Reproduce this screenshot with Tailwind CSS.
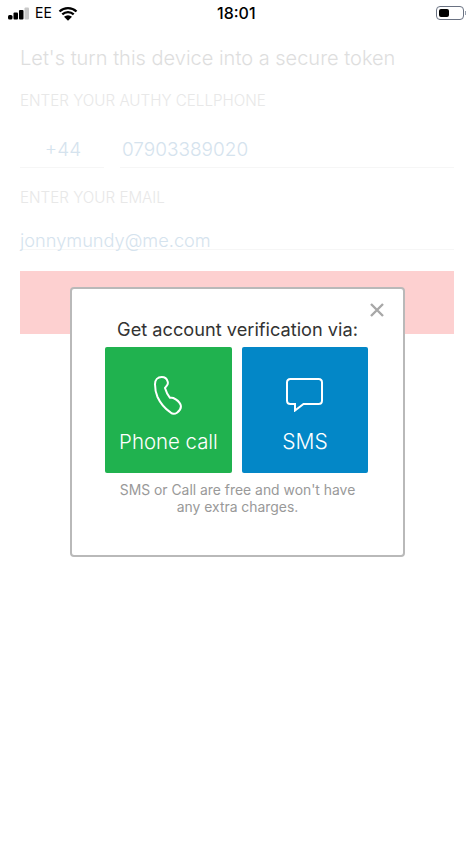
<!DOCTYPE html>
<html lang="en">
<head>
    <meta charset="UTF-8">
    <meta name="viewport" content="width=device-width, initial-scale=1.0">
    <title>Authy</title>
    <script src="https://cdn.jsdelivr.net/npm/@tailwindcss/browser@4"></script>
</head>
<body class="bg-white font-['Inter','Liberation_Sans',sans-serif]">
<div class="relative w-[474px] h-[843px] overflow-hidden bg-white">

    <!-- status bar -->
    <div class="flex items-center h-[26px] px-[8px] text-black">
        <div class="flex items-center w-[209px] gap-[5px]">
            <svg width="21" height="13" viewBox="0 0 21 13">
                <rect x="0" y="8" width="4.500" height="4.500" rx="1.500" fill="#000"/>
                <rect x="5.500" y="5.500" width="4.500" height="7" rx="1" fill="#000"/>
                <rect x="11" y="3" width="4.500" height="9.500" rx="1" fill="#000"/>
                <rect x="16.500" y="0.500" width="4.500" height="12" rx="1" fill="#c8c8c8"/>
            </svg>
            <span class="text-[14px] leading-none ml-[1px]">EE</span>
            <svg class="ml-[1px]" width="20" height="15" viewBox="0 0 20 15">
                <path d="M1.500 5.500a12.500 12.500 0 0 1 17 0M4.300 8.400a8.300 8.300 0 0 1 11.400 0" fill="none" stroke="#000" stroke-width="2.300"/>
                <path d="M6 10.800a6 6 0 0 1 8 0L10 14.800z" fill="#000"/>
            </svg>
        </div>
        <div class="text-[16px] font-medium leading-none">18:01</div>
        <div class="ml-auto mr-0 flex items-center">
            <div class="w-[28px] h-[14px] rounded-[4px] border border-gray-500 p-[2px]">
                <div class="w-[10px] h-full rounded-[2px] bg-black"></div>
            </div>
            <div class="w-[1px] h-[4px] bg-gray-400 ml-[1px]"></div>
        </div>
    </div>

    <!-- background form, washed out behind the dialog -->
    <div class="px-[20px]">
        <h1 class="mt-[19px] text-[20px] leading-[26px] font-light text-[#dedede] whitespace-nowrap">Let's turn this device into a secure token</h1>
        <p class="mt-[22px] text-[15.200px] leading-[16px] font-light text-[#e8e8e8]">ENTER YOUR AUTHY CELLPHONE</p>

        <div class="flex gap-[16px] mt-[24px]">
            <div class="w-[84px] h-[35px] border-b border-[#f6f6f6] text-center text-[19px] leading-[33px] font-light text-[#d5e3ee] pl-[2px]">+44</div>
            <div class="flex-1 h-[35px] border-b border-[#f6f6f6] pl-[2px] text-[19px] leading-[33px] font-light text-[#d5e3ee]">07903389020</div>
        </div>

        <p class="mt-[22px] text-[15.200px] leading-[16px] font-light text-[#e8e8e8]">ENTER YOUR EMAIL</p>

        <div class="mt-[20px] h-[24px] border-b border-[#f6f6f6] text-[18.200px] leading-[29px] font-light text-[#d5e3ee]">jonnymundy@me.com</div>

        <div class="mt-[21px] h-[63px] bg-[#fdd0d0]"></div>
    </div>

    <!-- dialog -->
    <div class="absolute left-[70px] top-[287px] w-[335px] h-[270px] bg-white border-2 border-[#b9b9b9] rounded-[4px] px-[33px]">
        <svg class="absolute right-[18px] top-[13px]" width="16" height="16" viewBox="0 0 16 16">
            <path d="M2 2l12 12M14 2l-12 12" stroke="#a8a8a8" stroke-width="2.400" fill="none"/>
        </svg>
        <p class="mt-[27px] text-center text-[18.200px] leading-[26px] text-[#333] whitespace-nowrap">Get account verification via:</p>
        <div class="flex gap-[10px] mt-[5px]">
            <div class="w-[127px] h-[126px] rounded-[2px] bg-[#20b24f] flex flex-col items-center text-white">
                <svg class="mt-[29px]" width="30" height="40" viewBox="0 0 30 40">
                    <path d="M7.700 1c3 0 5.300 2 6 4.700.4 1.500 0 3-.9 4l-1.800 2.300c1 3.500 2.800 7 5 9.800 1 .1 2-.3 3.300.2 3.300 1.500 6 3.800 7.200 6.500 1 2.700-.4 6-3.500 8.200-2.500 1.700-4.800 1.200-6.500-.3C11 32.700 6.500 27.500 3.500 21 1.800 17 1 12.500 1 8.200 1 4 3.800 1 7.700 1z" fill="none" stroke="#fff" stroke-width="2"/>
                </svg>
                <span class="mt-[13px] text-[20.400px] leading-[26px] font-light whitespace-nowrap">Phone call</span>
            </div>
            <div class="w-[126px] h-[126px] rounded-[2px] bg-[#0387c7] flex flex-col items-center text-white">
                <svg class="mt-[31px]" width="38" height="34" viewBox="0 0 38 34">
                    <path d="M4.500 1h28c2 0 3.500 1.500 3.500 3.500v18c0 2-1.500 3.500-3.500 3.500H17.500L9 32.500V26H4.500C2.500 26 1 24.500 1 22.500v-18C1 2.500 2.500 1 4.500 1z" fill="none" stroke="#fff" stroke-width="2"/>
                </svg>
                <span class="mt-[17px] text-[21px] leading-[26px] font-light">SMS</span>
            </div>
        </div>
        <p class="mt-[9px] text-center text-[13.900px] leading-[17px] text-[#999] whitespace-nowrap">SMS or Call are free and won't have<br>any extra charges.</p>
    </div>
</div>
</body>
</html>
